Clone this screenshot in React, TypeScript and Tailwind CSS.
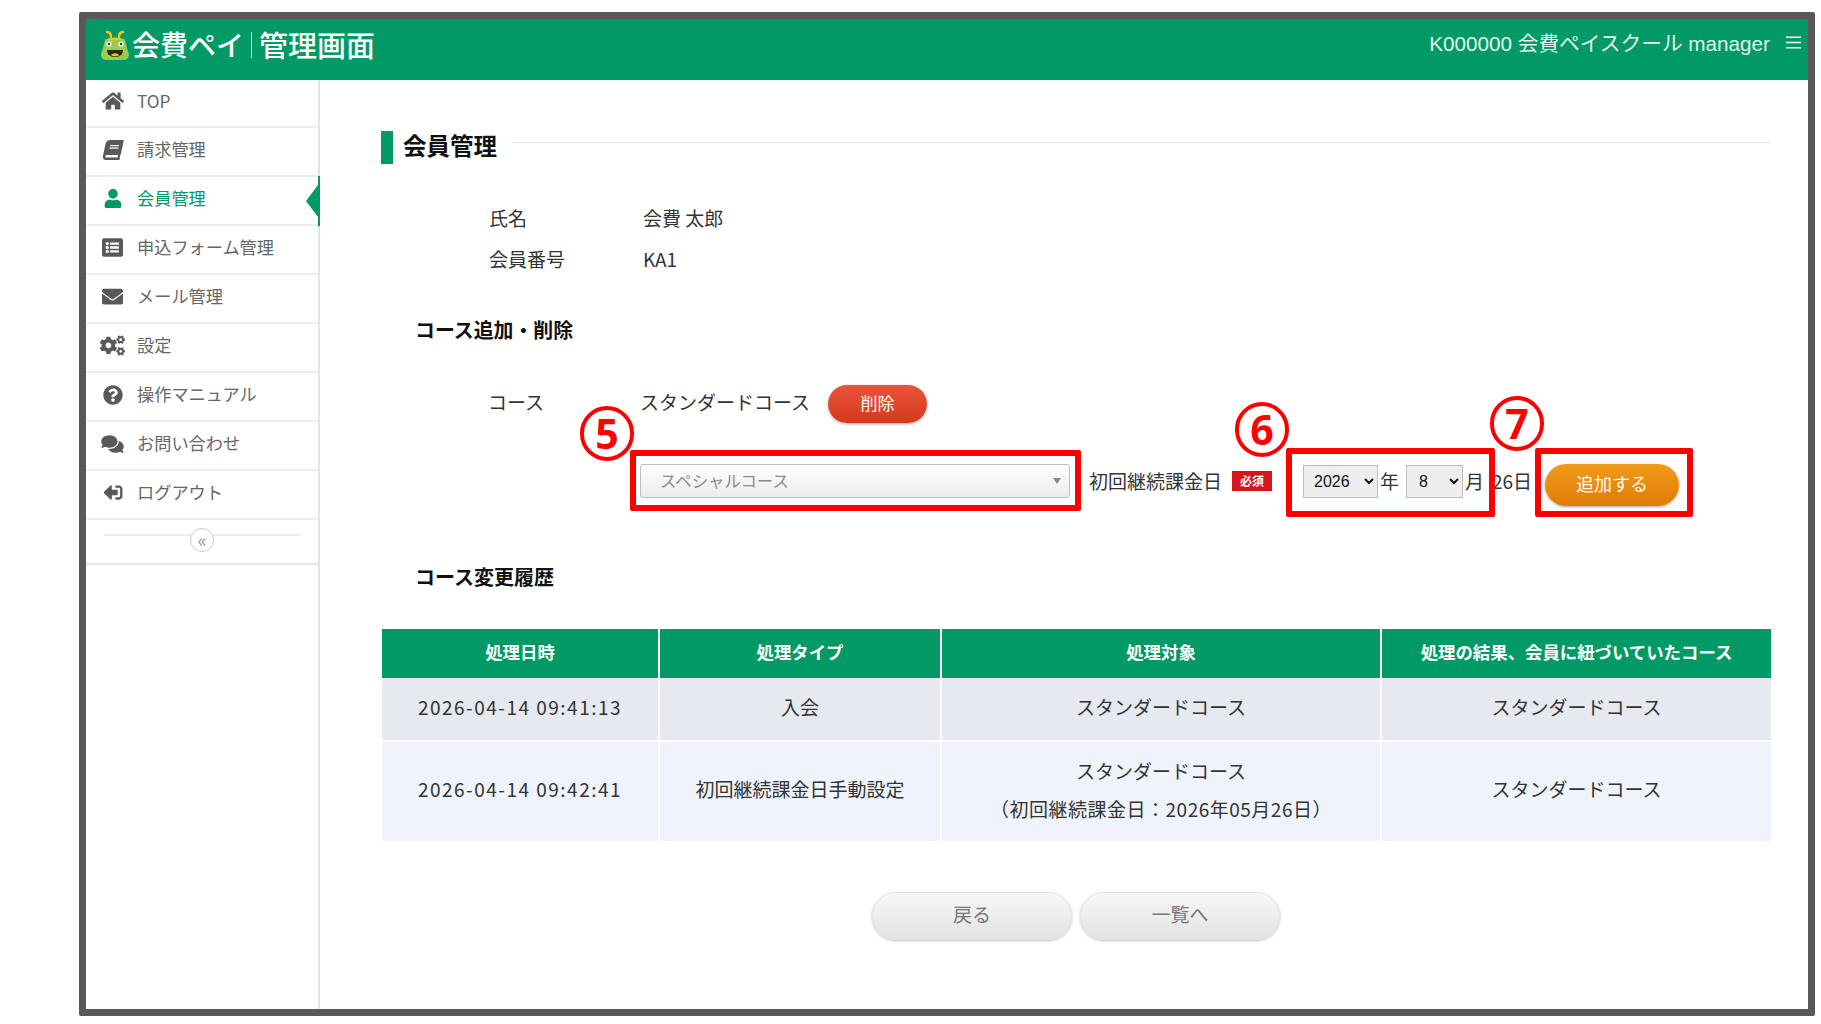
import React from 'react';
import {
  FaHome,
  FaBook,
  FaUser,
  FaListAlt,
  FaEnvelope,
  FaCogs,
  FaQuestionCircle,
  FaComments,
  FaSignOutAlt,
} from 'react-icons/fa';

const menu = [
  { label: 'TOP', icon: <FaHome className="h-[20px] w-[22px]" />, h: 'h-[48px]' },
  { label: '請求管理', icon: <FaBook className="h-[20px] w-[20px] -skew-x-12" />, h: 'h-[49px]' },
  { label: '会員管理', icon: <FaUser className="h-[19px] w-[18px]" />, h: 'h-[49px]', active: true },
  { label: '申込フォーム管理', icon: <FaListAlt className="h-[21px] w-[23px]" />, h: 'h-[49px]' },
  { label: 'メール管理', icon: <FaEnvelope className="h-[21px] w-[23px]" />, h: 'h-[49px]' },
  { label: '設定', icon: <FaCogs className="h-[21px] w-[25px]" />, h: 'h-[49px]' },
  { label: '操作マニュアル', icon: <FaQuestionCircle className="h-[20px] w-[20px]" />, h: 'h-[49px]' },
  { label: 'お問い合わせ', icon: <FaComments className="h-[20px] w-[23px]" />, h: 'h-[49px]' },
  { label: 'ログアウト', icon: <FaSignOutAlt className="h-[19px] w-[20px] -scale-x-100" />, h: 'h-[49px]' },
];

const FrogLogo = () => (
  <svg width="30" height="32" viewBox="0 0 30 32">
    <path d="M11 8 Q11 3 7 3 M19 8 Q19 3 23 3" stroke="#f5c518" strokeWidth="2.5" strokeLinecap="round" fill="none" />
    <path d="M4 11 Q15 6 26 11 Z" fill="#f5c518" />
    <path d="M5 11 H25 Q27 20 29 25 Q29 31 23 31 H7 Q1 31 1 25 Q3 20 5 11 Z" fill="#9ccc4f" />
    <circle cx="9" cy="15" r="2.6" fill="#fff" />
    <circle cx="21" cy="15" r="2.6" fill="#fff" />
    <circle cx="9" cy="15" r="1.3" fill="#17433a" />
    <circle cx="21" cy="15" r="1.3" fill="#17433a" />
    <path d="M7 21 H23 Q23 28 15 28 Q7 28 7 21 Z" fill="#2a2a22" />
    <path d="M10.5 26 Q15 22.5 19.500 26 Q15 28.500 10.500 26 Z" fill="#f5c518" />
  </svg>
);

const Sidebar = () => (
  <aside className="relative w-[234px] shrink-0 border-r-2 border-r-[#e3e3e3] bg-white">
    {menu.map((item) => (
      <div
        key={item.label}
        className={`relative flex items-center border-b-2 border-b-[#eeeeee] pb-[4px] ${item.h} ${
          item.active ? 'text-[#019966]' : 'text-[#666666]'
        }`}
      >
        <span className={`flex w-[51px] shrink-0 justify-center pl-[2px] ${item.active ? '' : 'text-[#595959]'}`}>
          {item.icon}
        </span>
        <span className="pb-[1px] text-[17.2px] leading-none">{item.label}</span>
        {item.active && (
          <span className="absolute top-[-1px] right-[-2px] flex h-[50px] items-center border-r-[2px] border-r-[#019966]">
            <span className="h-0 w-0 border-y-[16px] border-r-[12px] border-y-transparent border-r-[#019966]" />
          </span>
        )}
      </div>
    ))}
    <div className="relative h-[45px] border-b-2 border-b-[#e8e8e8]">
      <div className="absolute top-[14px] left-[18px] h-[2px] w-[197px] bg-[#eeeeee]" />
      <div className="absolute top-[8px] left-[104px] flex h-[24px] w-[24px] items-center justify-center rounded-full border border-[#cccccc] bg-white text-[19px] leading-none text-[#999999]">
        <span className="mt-[-3px]">«</span>
      </div>
    </div>
  </aside>
);

const Annotation = ({ n, className }: { n: string; className: string }) => (
  <div
    className={`absolute flex h-[55px] w-[54px] items-center justify-center rounded-full border-[4px] border-[#ff0000] bg-white font-['Open_Sans',sans-serif] text-[41px] leading-none font-bold text-[#ff0000] ${className}`}
  >
    {n}
  </div>
);

const thClass =
  'border-r-2 border-r-[#ffffff] pb-[2px] text-center text-[17.4px] font-bold text-white last:border-r-0';
const tdClass = 'border-r-2 border-r-[#ffffff] pb-[4px] text-center text-[19px] text-[#333333] last:border-r-0';

const App: React.FC = () => {
  return (
    <div className="relative h-[1024px] w-[1821px] overflow-hidden bg-white pt-[12px] pr-[6px] pl-[79px] font-['Noto_Sans_CJK_JP','Noto_Sans',sans-serif]">
      <div className="flex h-[1004px] flex-col rounded-[2px] border-[7px] border-[#595959]">
        <header className="flex h-[61px] shrink-0 items-start justify-between bg-[#019966] pt-[10px] pr-[7px] pl-[14px] text-white">
          <div className="flex items-center">
            <FrogLogo />
            <span className="mb-[2px] ml-[2px] text-[28px] leading-none font-medium">会費ペイ</span>
            <span className="mx-[7px] h-[26px] w-px bg-[#d8efe6]" />
            <span className="mb-[2px] text-[29px] leading-none font-medium">管理画面</span>
          </div>
          <div className="mt-[5px] flex items-center text-[#e3f4ed]">
            <span className="font-['Liberation_Sans','Noto_Sans_CJK_JP',sans-serif] text-[20.7px] leading-none">
              K000000 会費ペイスクール manager
            </span>
            <svg className="mb-[4px] ml-[16px]" width="15" height="13" viewBox="0 0 15 13">
              <path d="M0 1.2H15M0 6.5H15M0 11.8H15" stroke="#ffffff" strokeWidth="1.6" />
            </svg>
          </div>
        </header>

        <div className="flex flex-1">
          <Sidebar />
          <main className="flex-1 pt-[51px] pr-[37px] pl-[61px]">
            <div className="flex h-[33px] items-center">
              <span className="h-full w-[12px] bg-[#019966]" />
              <h1 className="mb-[4px] ml-[10px] text-[23.5px] leading-none font-bold text-[#111111]">会員管理</h1>
              <span className="mb-[10px] ml-[15px] h-px flex-1 bg-[#e4e4e4]" />
            </div>

            <div className="mt-[33px] pl-[108px] text-[19px] text-[#333333]">
              <div className="flex h-[42px] items-center">
                <span className="w-[154px]">氏名</span>
                <span>会費 太郎</span>
              </div>
              <div className="flex h-[41px] items-center">
                <span className="w-[154px]">会員番号</span>
                <span>KA1</span>
              </div>
            </div>

            <h2 className="mt-[36px] flex h-[28px] items-center pl-[34px] text-[19.9px] leading-none font-bold text-[#111111]">
              コース追加・削除
            </h2>

            <div className="mt-[41px] flex h-[38px] items-center pl-[107px] text-[19px] text-[#333333]">
              <span className="mb-[4px] w-[152px]">コース</span>
              <span className="mb-[4px] w-[188px]">スタンダードコース</span>
              <button className="h-[38px] w-[99px] rounded-full bg-gradient-to-b from-[#e95539] to-[#d4381b] pb-[3px] text-[17px] text-white shadow-[0_1px_3px_rgba(0,0,0,0.35)]">
                削除
              </button>
            </div>

            <div className="mt-[41px] flex h-[34px] items-center pl-[259px] text-[19px] text-[#333333]">
              <div className="flex h-[34px] w-[430px] items-center justify-between rounded-[3px] border border-[#bdbdbd] bg-gradient-to-b from-[#ffffff] to-[#ececec] pr-[8px] pb-[1px] pl-[19px] text-[16.4px] text-[#8a8a8a]">
                <span>スペシャルコース</span>
                <span className="h-0 w-0 border-x-[4px] border-t-[6px] border-x-transparent border-t-[#888888]" />
              </div>
              <span className="ml-[19px] w-[143px]">初回継続課金日</span>
              <span className="flex h-[20px] w-[40px] items-center justify-center bg-[#d8141c] text-[12px] leading-none font-bold text-white">
                必須
              </span>
              <select
                defaultValue="2026"
                className="ml-[31px] h-[33px] w-[75px] appearance-auto border border-[#bdbdbd] bg-[#eeeeee] pl-[6px] font-['Liberation_Sans',sans-serif] text-[16px] text-[#111111]"
              >
                <option>2026</option>
              </select>
              <span className="ml-[2px] w-[26px]">年</span>
              <select
                defaultValue="8"
                className="h-[33px] w-[57px] appearance-auto border border-[#bdbdbd] bg-[#eeeeee] pl-[8px] font-['Liberation_Sans',sans-serif] text-[16px] text-[#111111]"
              >
                <option>8</option>
              </select>
              <span className="ml-[2px] w-[26px]">月</span>
              <span className="w-[54px] pl-[1px]">26日</span>
              <button className="mt-[8px] h-[42px] w-[134px] shrink-0 rounded-full bg-gradient-to-b from-[#f39a1b] to-[#dd7c05] pb-[4px] text-[18px] text-white shadow-[0_1px_3px_rgba(0,0,0,0.35)]">
                追加する
              </button>
            </div>

            <h2 className="mt-[65px] flex h-[28px] items-center pl-[34px] text-[20px] leading-none font-bold text-[#111111]">
              コース変更履歴
            </h2>

            <div className="mt-[38px] pl-[1px]">
              <table className="w-full table-fixed border-collapse">
                <colgroup>
                  <col className="w-[277px]" />
                  <col className="w-[282px]" />
                  <col className="w-[440px]" />
                  <col />
                </colgroup>
                <thead>
                  <tr className="h-[49px] bg-[#019966]">
                    <th className={thClass}>処理日時</th>
                    <th className={thClass}>処理タイプ</th>
                    <th className={thClass}>処理対象</th>
                    <th className={thClass}>処理の結果、会員に紐づいていたコース</th>
                  </tr>
                </thead>
                <tbody>
                  <tr className="h-[63px] bg-[#e6e9f0]">
                    <td className={`${tdClass} tracking-[1.5px]`}>2026-04-14 09:41:13</td>
                    <td className={tdClass}>入会</td>
                    <td className={tdClass}>スタンダードコース</td>
                    <td className={tdClass}>スタンダードコース</td>
                  </tr>
                  <tr className="h-[100px] border-t-2 border-t-white bg-[#eff4fc]">
                    <td className={`${tdClass} tracking-[1.5px]`}>2026-04-14 09:42:41</td>
                    <td className={tdClass}>初回継続課金日手動設定</td>
                    <td className={tdClass}>
                      <div className="leading-[38px]">スタンダードコース</div>
                      <div className="leading-[38px] tracking-[0.5px]">（初回継続課金日：2026年05月26日）</div>
                    </td>
                    <td className={tdClass}>スタンダードコース</td>
                  </tr>
                </tbody>
              </table>
            </div>

            <div className="mt-[51px] flex justify-center gap-[8px]">
              <button className="h-[48px] w-[200px] rounded-full border border-[#e2e2e2] bg-gradient-to-b from-[#f8f8f8] to-[#e2e2e2] pb-[3px] text-[19px] text-[#777777] shadow-[0_1px_3px_rgba(0,0,0,0.25)]">
                戻る
              </button>
              <button className="h-[48px] w-[200px] rounded-full border border-[#e2e2e2] bg-gradient-to-b from-[#f8f8f8] to-[#e2e2e2] pb-[3px] text-[19px] text-[#777777] shadow-[0_1px_3px_rgba(0,0,0,0.25)]">
                一覧へ
              </button>
            </div>
          </main>
        </div>
      </div>

      {/* callout boxes drawn on top of the screenshot */}
      <div className="absolute top-[450px] left-[630px] h-[61px] w-[451px] rounded-[2px] border-[6px] border-[#ff0000]" />
      <div className="absolute top-[448px] left-[1286px] h-[69px] w-[209px] rounded-[2px] border-[6px] border-[#ff0000]" />
      <div className="absolute top-[448px] left-[1535px] h-[69px] w-[158px] rounded-[2px] border-[6px] border-[#ff0000]" />
      <Annotation n="5" className="top-[406px] left-[580px]" />
      <Annotation n="6" className="top-[402px] left-[1235px]" />
      <Annotation n="7" className="top-[396px] left-[1490px]" />
    </div>
  );
};

export default App;
